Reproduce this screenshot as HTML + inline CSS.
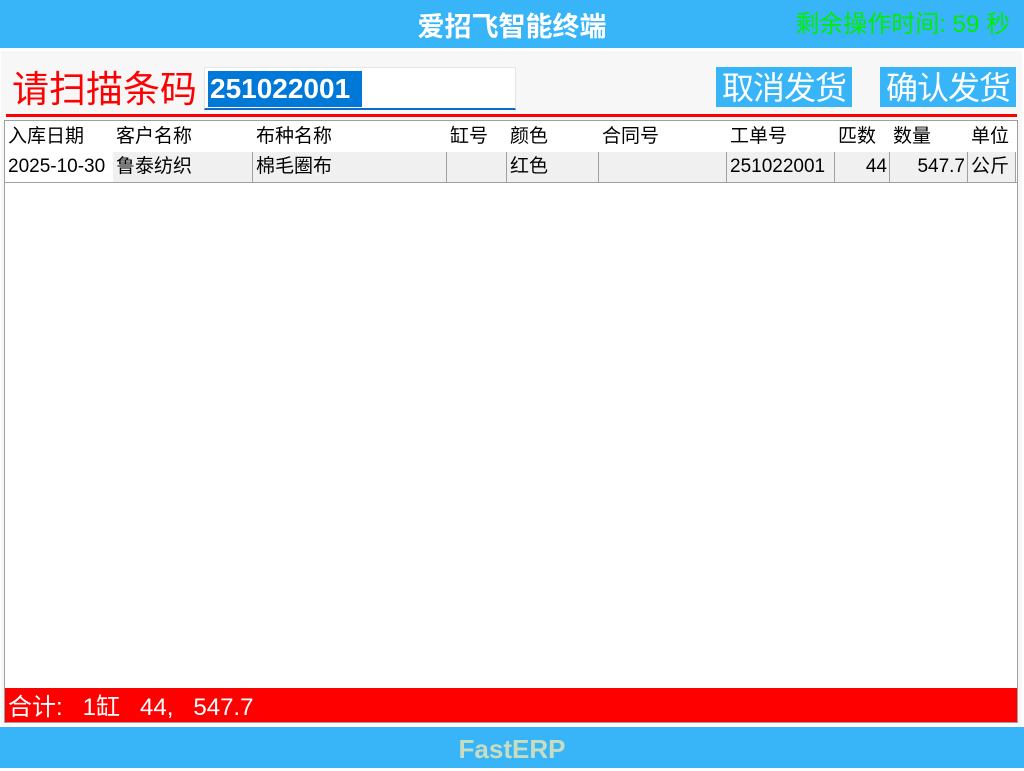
<!DOCTYPE html>
<html><head><meta charset="utf-8"><style>
*{margin:0;padding:0;box-sizing:border-box}
body{width:1024px;height:768px;overflow:hidden;background:#fff;font-family:"Liberation Sans","Noto Sans CJK SC",sans-serif;position:relative}
.top{position:absolute;left:0;top:0;width:1024px;height:48px;background:#38b5f8}
.title{position:absolute;left:0;width:1024px;top:5px;text-align:center;color:#fff;font-size:27px;font-weight:bold}
.timer{position:absolute;right:14px;top:4px;color:#00ee00;font-size:24px}
.main{position:absolute;left:1px;top:51px;width:1021px;height:674px;background:#f7f7f7}
.lbl{position:absolute;left:12px;top:68px;color:#f00;font-size:37px;line-height:44px}
.inp{position:absolute;left:204px;top:67px;width:312px;height:43px;background:#fff;border:1px solid #e6e6e6;border-bottom:2px solid #0a6ad0}
.sel{position:absolute;left:3px;top:3px;height:36px;width:154px;background:#0078d7;color:#fff;font-size:28px;font-weight:bold;line-height:36px;padding-left:2px}
.ghost{position:absolute;left:450px;top:60px;color:#fff;font-size:24px}
.btn{position:absolute;top:67px;width:136px;height:40px;background:#38b5f8;color:#fff;font-size:32px;line-height:42px;text-align:center;letter-spacing:-1px}
.red{position:absolute;left:6px;top:114px;width:1011px;height:3px;background:#f00}
.tbl{position:absolute;left:4px;top:120px;width:1014px;height:603px;background:#fff;border:1px solid #a0a0a0}
.row{position:absolute;left:0;height:30px;width:1011px}
.c{position:absolute;top:0;height:30px;line-height:30px;font-size:19px;color:#000;padding-left:3px;white-space:nowrap}
.r2 .c{background:#f0f0f0;border-right:1px solid #a0a0a0}
.sum{position:absolute;left:0;top:567px;width:1012px;height:34px;background:#f00;color:#fff;font-size:24px;line-height:40px;padding-left:3px;white-space:pre}
.foot{position:absolute;left:0;top:727px;width:1024px;height:41px;background:#38b5f8;text-align:center;color:#c8dcc0;font-size:26px;font-weight:bold;line-height:44px}
</style></head><body>
<div class="top"><div class="title">爱招飞智能终端</div><div class="timer">剩余操作时间: 59 秒</div></div>
<div class="main"></div>
<div class="ghost">科技</div>
<div class="lbl">请扫描条码</div>
<div class="inp"><div class="sel">251022001</div></div>
<div class="btn" style="left:716px">取消发货</div>
<div class="btn" style="left:880px">确认发货</div>
<div class="red"></div>
<div class="tbl">
<div class="row" style="top:1px">
<div class="c" style="left:0">入库日期</div><div class="c" style="left:108px">客户名称</div><div class="c" style="left:248px">布种名称</div><div class="c" style="left:442px">缸号</div><div class="c" style="left:502px">颜色</div><div class="c" style="left:594px">合同号</div><div class="c" style="left:722px">工单号</div><div class="c" style="left:830px">匹数</div><div class="c" style="left:885px">数量</div><div class="c" style="left:963px">单位</div>
</div>
<div class="row r2" style="top:31px">
<div class="c" style="left:0;width:108px;background:#fff;border:none">2025-10-30</div><div class="c" style="left:108px;width:140px">鲁泰纺织</div><div class="c" style="left:248px;width:194px">棉毛圈布</div><div class="c" style="left:442px;width:60px"></div><div class="c" style="left:502px;width:92px">红色</div><div class="c" style="left:594px;width:128px"></div><div class="c" style="left:722px;width:108px">251022001</div><div class="c" style="left:830px;width:55px;text-align:right;padding-right:2px">44</div><div class="c" style="left:885px;width:78px;text-align:right;padding-right:2px">547.7</div><div class="c" style="left:963px;width:48px">公斤</div>
</div>
<div style="position:absolute;left:0;top:61px;width:1012px;height:1px;background:#a0a0a0"></div>
<div class="sum">合计:   1缸   44,   547.7</div>
</div>
<div class="foot">FastERP</div>
</body></html>
